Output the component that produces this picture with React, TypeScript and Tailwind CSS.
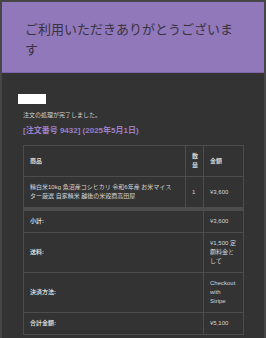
export default function App() {
    const font = { fontFamily: '"Liberation Sans", "Noto Sans CJK JP", sans-serif' };

    const totals = [
        { label: "小計:", value: ["¥3,600"] },
        { label: "送料:", value: ["¥1,500 定額料金として"] },
        { label: "決済方法:", value: ["Checkout with Stripe"] },
        { label: "合計金額:", value: ["¥5,100"] },
    ];

    return (
        <div className="w-[266px] h-[338px] overflow-hidden bg-[#333333] border-x-[2px] border-t-[2px] border-[#464646]" style={font}>
            {/* Header */}
            <div className="bg-[#9178ba] border-b border-[#7e66a6] pl-[23px] pr-[22px] pt-[17px] pb-[13px]">
                <h1 className="text-[13px] leading-[20px] text-[#3a3340] font-normal" style={{ fontFamily: '"Noto Sans CJK JP", sans-serif' }}>
                    ご利用いただきありがとうございます
                </h1>
            </div>

            {/* Body */}
            <div className="px-[16px] pt-[21px]">
                <div className="w-[28px] h-[10px] bg-white"></div>

                <div className="pl-[5px] pr-[5px]">
                    <p className="mt-[7px] text-[6px] leading-[9px] text-[#cfcfcf]">注文の処理が完了しました。</p>

                    <h2 className="mt-[5px] text-[8px] leading-[12px] font-bold text-[#9a80c9]">
                        [注文番号 9432] (2025年5月1日)
                    </h2>

                    <table className="mt-[8px] w-[220px] table-fixed border-collapse text-[6px] leading-[9px] text-[#d6d6d6]">
                        <colgroup>
                            <col className="w-[162px]" />
                            <col className="w-[18px]" />
                            <col className="w-[40px]" />
                        </colgroup>
                        <thead>
                            <tr>
                                <th className="border border-[#4c4c4c] p-[6px] text-left font-bold">商品</th>
                                <th className="border border-[#4c4c4c] p-[6px] text-left font-bold">数量</th>
                                <th className="border border-[#4c4c4c] p-[6px] text-left font-bold">金額</th>
                            </tr>
                        </thead>
                        <tbody>
                            <tr>
                                <td className="border border-[#4c4c4c] pl-[6px] pr-[10px] py-[6px] align-middle">
                                    精白米10kg 魚沼産コシヒカリ 令和6年産 お米マイスター厳選 自家精米 越後の米穀商高田屋
                                </td>
                                <td className="border border-[#4c4c4c] p-[6px] align-middle">1</td>
                                <td className="border border-[#4c4c4c] p-[6px] align-middle">¥3,600</td>
                            </tr>
                        </tbody>
                        <tfoot>
                            {totals.map((row, idx) => (
                                <tr key={idx}>
                                    <th colSpan={2} className={`border border-[#4c4c4c] p-[6px] text-left font-bold ${idx === 0 ? "border-t-[4px]" : ""}`}>
                                        {row.label}
                                    </th>
                                    <td className={`border border-[#4c4c4c] p-[6px] ${idx === 0 ? "border-t-[4px]" : ""}`}>
                                        {row.value}
                                    </td>
                                </tr>
                            ))}
                        </tfoot>
                    </table>
                </div>
            </div>
        </div>
    );
}
